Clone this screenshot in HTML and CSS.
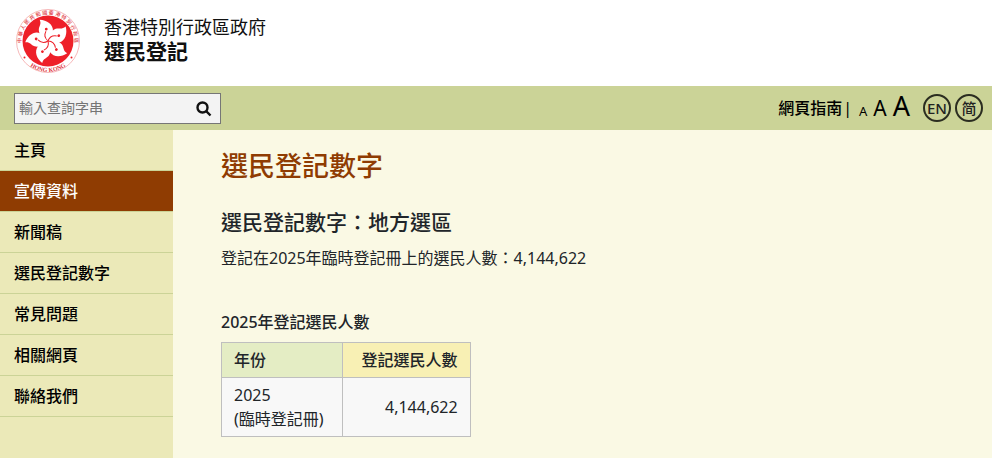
FILE: index.html
```html
<!DOCTYPE html>
<html lang="zh-Hant-HK">
<head>
<meta charset="utf-8">
<meta name="viewport" content="width=device-width, initial-scale=1">
<title>選民登記</title>
<link rel="stylesheet" href="styles.css">
</head>
<body>
<header class="masthead">
  <svg class="emblem" viewBox="-33 -33 66 66" role="img" aria-label="香港特別行政區">
    <defs>
      <path id="ring-top" d="M-23.500 12.500 A26.600 26.600 0 1 1 23.500 12.500"/>
      <path id="ring-bottom" d="M-24 19.500 A30.900 30.900 0 0 0 24 19.500"/>
      <g id="petal">
        <path class="emblem-white" d="M0 0 C-3 -3 -8.500 -6 -8 -12 C-7.500 -16 -4.500 -17 -6 -22 C1 -21 7 -16 6 -9.500 C5.500 -5 1.500 -4 0 0Z"/>
        <path class="emblem-vein" d="M0 0 C-3 -3 -3 -7 -1 -10"/>
        <circle class="emblem-red" cx="-0.500" cy="-12" r="1.400"/>
      </g>
    </defs>
    <circle class="emblem-rim" r="31.500"/>
    <circle class="emblem-red" r="25.500"/>
    <g transform="rotate(-6)">
      <use href="#petal"/>
      <use href="#petal" transform="rotate(72)"/>
      <use href="#petal" transform="rotate(144)"/>
      <use href="#petal" transform="rotate(216)"/>
      <use href="#petal" transform="rotate(288)"/>
    </g>
    <circle class="emblem-red" cx="-23.500" cy="16.500" r="1"/>
    <circle class="emblem-red" cx="23.500" cy="16.500" r="1"/>
    <text class="emblem-text" text-anchor="middle"><textPath href="#ring-top" startOffset="50%">中 華 人 民 共 和 國 香 港 特 別 行 政 區</textPath></text>
    <text class="emblem-latin" text-anchor="middle"><textPath href="#ring-bottom" startOffset="50%">HONG KONG</textPath></text>
  </svg>
  <div class="site-name">
    <div class="government">香港特別行政區政府</div>
    <div class="site-title">選民登記</div>
  </div>
</header>

<div class="toolbar">
  <form class="search" role="search">
    <input class="search-input" type="text" placeholder="輸入查詢字串" aria-label="輸入查詢字串">
    <button class="search-button" type="button" aria-label="搜尋">
      <svg class="search-icon" viewBox="0 0 16 16" aria-hidden="true"><circle cx="6.500" cy="6.500" r="5"/><path d="M10.200 10.200 L14.500 14.500"/></svg>
    </button>
  </form>
  <div class="tools">
    <a class="sitemap" href="#">網頁指南</a>
    <span class="divider">|</span>
    <button class="size size-small" type="button">A</button>
    <button class="size size-medium" type="button">A</button>
    <button class="size size-large" type="button">A</button>
    <a class="language language-first" href="#">EN</a>
    <a class="language" href="#" lang="zh-Hans">简</a>
  </div>
</div>

<div class="layout">
  <nav class="menu">
    <a class="menu-item" href="#">主頁</a>
    <a class="menu-item menu-item-active" href="#">宣傳資料</a>
    <a class="menu-item" href="#">新聞稿</a>
    <a class="menu-item" href="#">選民登記數字</a>
    <a class="menu-item" href="#">常見問題</a>
    <a class="menu-item" href="#">相關網頁</a>
    <a class="menu-item" href="#">聯絡我們</a>
  </nav>
  <main class="content">
    <h1>選民登記數字</h1>
    <h2>選民登記數字：地方選區</h2>
    <p class="summary">登記在2025年臨時登記冊上的選民人數：4,144,622</p>
    <table class="figures">
      <caption>2025年登記選民人數</caption>
      <thead>
        <tr><th class="year" scope="col">年份</th><th class="count" scope="col">登記選民人數</th></tr>
      </thead>
      <tbody>
        <tr><td class="year">2025<br>(臨時登記冊)</td><td class="count">4,144,622</td></tr>
      </tbody>
    </table>
  </main>
</div>
</body>
</html>
```
FILE: styles.css
```css
* {
  box-sizing: border-box;
}

body {
  display: flex;
  flex-direction: column;
  min-height: 100vh;
  margin: 0;
  background: #fff;
  color: #212529;
  font: 16px/24px "Noto Sans", "Noto Sans CJK TC", sans-serif;
}

a {
  color: #000;
  text-decoration: none;
}

.masthead {
  display: flex;
  gap: 23px;
  height: 86px;
  padding: 8px 15px;
}

.emblem {
  width: 66px;
  height: 66px;
}

.emblem-white {
  fill: #fff;
}

.emblem-red {
  fill: #ee2029;
}

.emblem-rim {
  fill: #fff;
  stroke: #f08a8c;
  stroke-width: 0.6;
}

.emblem-vein {
  fill: none;
  stroke: #ee2029;
  stroke-width: 1;
}

.emblem-text,
.emblem-latin {
  fill: #e0383f;
  font-size: 5px;
  font-weight: 500;
}

.emblem-latin {
  font-family: "Liberation Serif", serif;
  font-size: 6px;
  font-weight: 700;
}

.site-name {
  padding-top: 7px;
  color: #111;
}

.government {
  font-size: 18px;
  line-height: 24px;
}

.site-title {
  font-size: 21px;
  font-weight: 700;
  line-height: 24px;
}

.toolbar {
  display: flex;
  align-items: center;
  justify-content: space-between;
  height: 44px;
  padding: 0 9px 0 14px;
  background: #cbd397;
}

.search {
  display: flex;
  width: 207px;
  height: 31px;
  border: 1px solid #767676;
  background: #f3f3f3;
}

.search-input {
  flex: 1;
  min-width: 0;
  padding: 0 4px;
  border: 0;
  background: none;
  font: 14px/20px "Noto Sans", "Noto Sans CJK TC", sans-serif;
}

.search-input::placeholder {
  color: #757575;
}

.search-button {
  display: flex;
  align-items: center;
  justify-content: center;
  width: 32px;
  padding: 2px 0 0;
  border: 0;
  background: none;
}

.search-icon {
  width: 16px;
  height: 16px;
  fill: none;
  stroke: #111;
  stroke-width: 2.4;
}

.tools {
  display: flex;
  align-items: center;
  color: #000;
}

.sitemap {
  font-weight: 500;
}

.divider {
  margin: 0 4px 0 1px;
}

.size {
  align-self: baseline;
  padding: 0 3px;
  border: 0;
  background: none;
  color: #000;
  font-family: "Noto Sans", sans-serif;
  line-height: 28px;
}

.size-small {
  font-size: 13px;
}

.size-medium {
  font-size: 21px;
}

.size-large {
  font-size: 27px;
}

.language {
  width: 28px;
  height: 28px;
  margin-left: 4px;
  border: 2px solid #2b2d20;
  border-radius: 50%;
  color: #222;
  font-size: 15px;
  font-weight: 500;
  line-height: 24px;
  text-align: center;
}

.language-first {
  margin-left: 10px;
}

.layout {
  display: flex;
  flex: 1;
}

.menu {
  flex: none;
  width: 173px;
  background: #ebe9b8;
}

.menu-item {
  display: block;
  padding: 8px 14px;
  border-bottom: 1px solid #cbd397;
  font-weight: 500;
}

.menu-item-active {
  background: #8f3c02;
  color: #fff;
}

.content {
  flex: 1;
  padding: 20px 48px 21px;
  background: #faf9e4;
}

h1 {
  margin: 0 0 24px;
  color: #8f3c02;
  font-size: 27px;
  font-weight: 500;
  line-height: 32px;
}

h2 {
  margin: 0 0 8px;
  font-size: 21px;
  font-weight: 500;
  line-height: 32px;
}

.summary {
  margin: 0 0 32px;
}

.figures {
  border-collapse: collapse;
}

.figures caption {
  padding: 8px 0;
  font-weight: 500;
  text-align: left;
}

.figures th,
.figures td {
  padding: 5px 12px;
  border: 1px solid #bfbfbf;
  background: #f8f8f8;
  font-weight: 500;
}

.figures td {
  font-weight: 400;
}

.figures .year {
  padding-right: 18px;
  text-align: left;
}

.figures .count {
  padding-left: 19px;
  text-align: right;
}

.figures th.year {
  background: #e4edc4;
}

.figures th.count {
  background: #f8f0b4;
}
```
